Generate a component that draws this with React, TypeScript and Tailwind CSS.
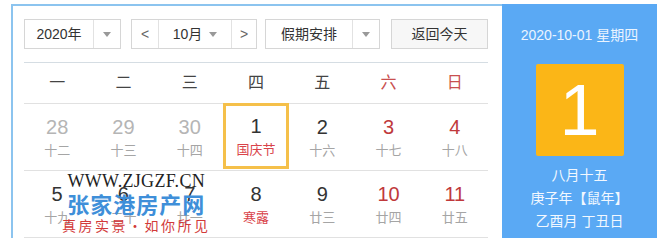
const weekdays = ["一", "二", "三", "四", "五", "六", "日"];

interface Day {
  n: number;
  lunar: string;
  other?: boolean;
  festival?: boolean;
  selected?: boolean;
}

const rows: Day[][] = [
  [
    { n: 28, lunar: "十二", other: true },
    { n: 29, lunar: "十三", other: true },
    { n: 30, lunar: "十四", other: true },
    { n: 1, lunar: "国庆节", festival: true, selected: true },
    { n: 2, lunar: "十六" },
    { n: 3, lunar: "十七" },
    { n: 4, lunar: "十八" },
  ],
  [
    { n: 5, lunar: "十九" },
    { n: 6, lunar: "二十" },
    { n: 7, lunar: "廿一" },
    { n: 8, lunar: "寒露", festival: true },
    { n: 9, lunar: "廿三" },
    { n: 10, lunar: "廿四" },
    { n: 11, lunar: "廿五" },
  ],
];

function Caret() {
  return (
    <span className="w-0 h-0 border-l-[4px] border-r-[4px] border-t-[5px] border-l-transparent border-r-transparent border-t-[#999]" />
  );
}

export default function App() {
  return (
    <div
      className="w-[667px] h-[244px] bg-white pt-[4px] pl-[11px]"
      style={{ fontFamily: '"Liberation Sans", "Noto Sans CJK SC", sans-serif' }}
    >
      <div className="flex w-[646px] h-[234px] border-l-2 border-t-2 border-[#8cc4ef]">
        {/* 左侧日历 */}
        <div className="relative w-[489px] pl-[11px] pr-[14px] pt-[13px]">
          <div className="flex h-[30px] text-[14px] text-[#333]">
            <div className="flex border border-[#d6d6d6]">
              <div className="w-[68px] flex items-center justify-center">2020年</div>
              <div className="w-[27px] flex items-center justify-center border-l border-[#e2e2e2]">
                <Caret />
              </div>
            </div>
            <div className="flex ml-[10px] border border-[#d6d6d6]">
              <div className="w-[27px] flex items-center justify-center text-[#666] border-r border-[#e2e2e2]">&lt;</div>
              <div className="w-[72px] flex items-center justify-center gap-[7px]">
                10月 <Caret />
              </div>
              <div className="w-[25px] flex items-center justify-center text-[#666] border-l border-[#e2e2e2]">&gt;</div>
            </div>
            <div className="flex ml-[8px] border border-[#d6d6d6]">
              <div className="w-[86px] flex items-center justify-center">假期安排</div>
              <div className="w-[27px] flex items-center justify-center border-l border-[#e2e2e2]">
                <Caret />
              </div>
            </div>
            <div className="ml-[11px] w-[98px] flex items-center justify-center border border-[#d6d6d6] bg-[#f7f7f7]">
              返回今天
            </div>
          </div>

          <div className="mt-[13px] border-t border-[#d5dde3] grid grid-cols-7 h-[41px] items-center text-center text-[16px]">
            {weekdays.map((w, i) => (
              <div key={w} className={i >= 5 ? "text-[#c9504f]" : "text-[#444]"}>
                {w}
              </div>
            ))}
          </div>

          {rows.map((row, r) => (
            <div key={r} className="grid grid-cols-7 h-[67px] border-t border-[#e1e1e1]">
              {row.map((d, i) => {
                const weekend = i >= 5;
                const numColor = d.other ? "text-[#b5b5b5]" : weekend ? "text-[#c0393b]" : "text-[#333]";
                return (
                  <div
                    key={i}
                    className={`flex flex-col items-center justify-center ${
                      d.selected ? "border-[3px] border-[#f5c04a] -mt-[1px] h-[66px]" : ""
                    }`}
                  >
                    <div className={`text-[20px] leading-[24px] ${numColor}`}>{d.n}</div>
                    <div
                      className={`text-[13px] leading-[18px] mt-[3px] ${
                        d.festival ? "text-[#d9434a]" : "text-[#a5a5a5]"
                      }`}
                    >
                      {d.lunar}
                    </div>
                  </div>
                );
              })}
            </div>
          ))}
          <div className="border-t border-[#e1e1e1]" />

          {/* 水印 */}
          <div className="absolute left-[49px] top-[165px] flex flex-col items-center">
            <div
              className="text-[18px] leading-[20px] text-[#222] tracking-[0.3px]"
              style={{ fontFamily: '"Liberation Serif", serif' }}
            >
              WWW.ZJGZF.CN
            </div>
            <div className="text-[22px] leading-[24px] font-bold text-[#3f8fd9] tracking-[1px]" style={{ fontFamily: '"Noto Sans CJK SC", sans-serif' }}>
              张家港房产网
            </div>
            <div className="text-[14px] leading-[18px] text-[#d23a3a] tracking-[2.5px] mt-[1px]" style={{ fontFamily: '"Noto Sans CJK SC", sans-serif' }}>
              真房实景·如你所见
            </div>
          </div>
        </div>

        {/* 右侧面板 */}
        <div className="w-[155px] -mt-[2px] h-[234px] bg-[#5aa9f4] flex flex-col items-center text-white">
          <div className="mt-[21px] text-[14px] text-[#eaf4ff]">2020-10-01 星期四</div>
          <div className="mt-[18px] w-[88px] h-[92px] bg-[#fbb617] rounded-[2px] flex items-center justify-center text-[72px] leading-none">
            1
          </div>
          <div className="mt-[8px] text-[14px] leading-[23px] text-center text-[#f2f8ff]">
            <div>八月十五</div>
            <div>庚子年【鼠年】</div>
            <div>乙酉月 丁丑日</div>
          </div>
        </div>
      </div>
    </div>
  );
}
